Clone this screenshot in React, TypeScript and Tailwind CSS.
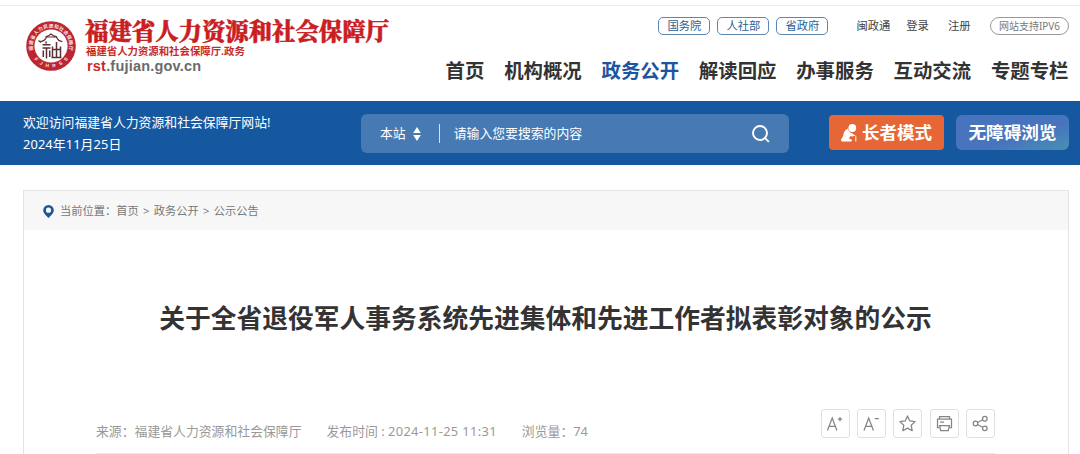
import { ReactNode } from 'react';

const portalLinks = ['国务院', '人社部', '省政府'];

const navigationItems = [
  { id: 'home', label: '首页' },
  { id: 'org', label: '机构概况' },
  { id: 'affairs', label: '政务公开' },
  { id: 'reading', label: '解读回应' },
  { id: 'service', label: '办事服务' },
  { id: 'interaction', label: '互动交流' },
  { id: 'topics', label: '专题专栏' }
];

const activeSection = 'affairs';

const Emblem = () => (
  <svg className="w-[50px] h-[50px] shrink-0" viewBox="0 0 50 50">
    <defs>
      <path id="ringTop" d="M8 31.800 A18.300 18.300 0 1 1 42 31.800" />
      <path id="ringBottom" d="M4.700 32 A21.500 21.500 0 0 0 45.300 32" />
    </defs>
    <circle cx="25" cy="25" r="24.8" fill="#bd2630" />
    <circle cx="25" cy="25" r="16.6" fill="#fff" />
    <text fill="#fbe3e3" fontSize="4.8" fontWeight="700" fontFamily="'Noto Sans CJK SC', sans-serif">
      <textPath href="#ringTop" startOffset="2.5" textLength="66" lengthAdjust="spacing">福建省人力资源和社会保障厅</textPath>
    </text>
    <text fill="#fbe3e3" fontSize="4.8" fontWeight="700" fontFamily="'Liberation Sans', sans-serif">
      <textPath href="#ringBottom" startOffset="7" textLength="39" lengthAdjust="spacing">FJHRSS</textPath>
    </text>
    {/* roof */}
    <path d="M14 20.5c3 0 5.500-1.800 6.500-4.500h10c1 2.700 3 4.500 6 4.500M19.500 15.800l3.500-1.300 2-1.500 2 1.500 4 1.300M12.500 19.500l2.500 2" fill="none" stroke="#5b3034" strokeWidth="1.2" />
    {/* seal mark */}
    <path d="M20 20.500v2M16.500 23.800h8M16.500 27h8M20.500 27v10.500M17.300 29.500v6.500M23.700 29.500v6.500M30.500 21v16M26.500 25.500v10.500M34.500 25.500v10.500M26.500 28.500h8M25.500 36.500h10" fill="none" stroke="#5b3034" strokeWidth="1.500" />
  </svg>
);

const ElderIcon = () => (
  <svg className="w-4 h-[18px]" viewBox="0 0 16 18" fill="#fff">
    <circle cx="11.300" cy="4" r="3.900" />
    <path d="M7 4.500C3.500 6 2.500 9 2.200 12L.2 15.200c-.5 1 .2 2.300 1.300 2.300h8.300c1.200 0 1.400-1.800.3-2.200l-2.300-.8 1.700-2.500 2.300.6 1.700-1.400-2.500-1.900C9.500 8.800 7.300 7.500 7 4.500z" />
    <path d="M11.500 11.500c2.200-.7 3.500.2 3.300 2v4" fill="none" stroke="#fff" strokeWidth="1" />
  </svg>
);

const ToolButton = ({ label, children }: { label: string; children: ReactNode }) => (
  <button
    aria-label={label}
    className="w-[29px] h-[29px] rounded-[3px] border border-[#e0e0e0] flex items-center justify-center"
  >
    <svg className="w-[19px] h-[19px]" viewBox="0 0 19 19" fill="none" stroke="#858585" strokeWidth="1.25">
      {children}
    </svg>
  </button>
);

const Header = () => (
  <header className="h-[101px] pt-[5px]">
    <div className="h-24 border-t border-[#ececec] pl-[26px] pr-[11px] flex justify-between">
      <div className="flex pt-[15px] gap-[9px]">
        <Emblem />
        <div className="-mt-[3px] whitespace-nowrap">
          <div className="text-[23.400px] leading-[25px] font-black text-[#c9201f] [-webkit-text-stroke:0.5px_#c9201f] font-['Noto_Serif_CJK_SC','Noto_Sans_CJK_SC',serif]">
            福建省人力资源和社会保障厅
          </div>
          <div className="text-[10.400px] leading-4 font-bold text-[#c62b2b] pl-px">福建省人力资源和社会保障厅.政务</div>
          <div className="text-[14.500px] leading-[15px] tracking-[0.2px] font-bold text-[#6b6b6b] pl-0.5 font-['Liberation_Sans',sans-serif]">
            <span className="text-[#c62b2b]">rst</span>.fujian.gov.cn
          </div>
        </div>
      </div>

      <div className="pt-[11px] flex flex-col items-end whitespace-nowrap">
        <div className="flex items-center h-[18px] text-[11.300px] text-[#444]">
          <div className="flex gap-[7px]">
            {portalLinks.map((link) => (
              <a
                key={link}
                href="#"
                className="w-[52px] h-[18px] rounded-[5px] border border-[#5d87ae] text-[#2a6191] flex items-center justify-center"
              >
                {link}
              </a>
            ))}
          </div>
          <a href="#" className="ml-[28px]">闽政通</a>
          <a href="#" className="ml-4">登录</a>
          <a href="#" className="ml-[19px]">注册</a>
          <span className="ml-[19.500px] w-[79px] h-[18px] rounded-full border border-[#999] text-[#777] text-[10px] flex items-center justify-center">
            网站支持IPV6
          </span>
        </div>
        <nav className="mt-[21px] mr-[0.500px] flex gap-[19.800px] text-[19.400px] leading-[30px] font-bold text-[#333]">
          {navigationItems.map((item) => (
            <a key={item.id} href={`#${item.id}`} className={activeSection === item.id ? 'text-[#1c56a0]' : ''}>
              {item.label}
            </a>
          ))}
        </nav>
      </div>
    </div>
  </header>
);

const SearchBand = () => (
  <section className="h-16 bg-[#16589f] pl-[23px] pr-[11px] flex items-start text-white whitespace-nowrap">
    <div className="w-[338px] pt-2.5 text-[12.850px] leading-[23px]">
      <p>欢迎访问福建省人力资源和社会保障厅网站!</p>
      <p className="-mt-px tracking-[0.1px]">2024年11月25日</p>
    </div>
    <div className="mt-[13px] w-[428px] h-[39px] rounded-[6px] bg-[#477ab3] pl-[19px] pr-[19px] flex items-center text-[12.850px]">
      <span>本站</span>
      <svg className="ml-[7px] w-2 h-[14px]" viewBox="0 0 8 14" fill="#fff">
        <path d="M4 0l3.800 6H.2zM4 14L.2 8h7.600z" />
      </svg>
      <span className="ml-[18px] w-px h-[19px] bg-[#d5e2f0]" />
      <span className="ml-[14px] flex-1">请输入您要搜索的内容</span>
      <svg className="w-[18px] h-[18px]" viewBox="0 0 18 18" fill="none" stroke="#fff" strokeWidth="1.900">
        <circle cx="8" cy="8" r="7" />
        <path d="M13 13l3.800 3.800" />
      </svg>
    </div>
    <a
      href="#"
      className="ml-10 mt-[14px] w-[115px] h-[35px] rounded-[4px] bg-[#e66735] flex items-center justify-center gap-[5px] text-[17.500px] font-bold"
    >
      <ElderIcon />
      长者模式
    </a>
    <a
      href="#"
      className="ml-3 mt-[14px] w-[113px] h-[35px] rounded-[6px] bg-linear-to-br from-[#4774bd] from-60% to-[#4790b5] flex items-center justify-center text-[17.600px] font-bold"
    >
      无障碍浏览
    </a>
  </section>
);

const Article = () => (
  <main className="mt-[25px] ml-[23px] mr-[11px] h-[264px] border border-b-0 border-[#e4e4e4]">
    <div className="h-[39px] bg-[#f7f7f7] pl-[19px] pt-px flex items-center text-[11.250px] text-[#777] whitespace-nowrap">
      <svg className="w-[11px] h-[13px] mr-1.5" viewBox="0 0 11 13">
        <path fill="#1d5796" fillRule="evenodd" d="M5.500 0A5.300 5.300 0 0 0 .2 5.300C.2 8.500 3.500 11 5.500 13c2-2 5.300-4.500 5.300-7.700A5.300 5.300 0 0 0 5.500 0zm0 2.600a2.600 2.600 0 1 1 0 5.200 2.600 2.600 0 0 1 0-5.200z" />
      </svg>
      <span>当前位置：首页</span>
      <span className="mx-[4.300px]">&gt;</span>
      <span>政务公开</span>
      <span className="mx-[4.300px]">&gt;</span>
      <span>公示公告</span>
    </div>

    <h1 className="mt-[68px] h-10 -ml-px text-center text-[25.750px] leading-10 font-bold text-[#333] whitespace-nowrap">
      关于全省退役军人事务系统先进集体和先进工作者拟表彰对象的公示
    </h1>

    <div className="mt-[71px] ml-[72px] w-[899px] h-[45px] border-b border-[#e8e8e8] flex items-start justify-between">
      <div className="pt-3 flex gap-[25px] text-[12.850px] leading-5 text-[#999] whitespace-nowrap">
        <span>来源：福建省人力资源和社会保障厅</span>
        <span>发布时间 : <span className="tracking-[0.350px]">2024-11-25 11:31</span></span>
        <span>浏览量：74</span>
      </div>
      <div className="flex gap-[7.300px]">
        <ToolButton label="放大字号">
          <path d="M1.500 16.500L6.200 4l4.700 12.500M3.100 12.300h6.200M11.800 5.200h4.400M14 3v4.400" />
        </ToolButton>
        <ToolButton label="缩小字号">
          <path d="M2 16.500L6.700 4l4.700 12.500M3.600 12.300h6.200M12.800 4.500h4" />
        </ToolButton>
        <ToolButton label="收藏">
          <path strokeLinejoin="round" d="M9.500 2l2.300 4.900 5.300.7-3.900 3.700 1 5.400-4.700-2.600-4.700 2.600 1-5.400-3.900-3.700 5.300-.7z" />
        </ToolButton>
        <ToolButton label="打印">
          <path d="M4.500 5V2.500h10V5M4 13.500H2.500V5h14v8.500H15M4.500 11.500h10l-1.200 5H5.700zM5 8h4" />
        </ToolButton>
        <ToolButton label="分享">
          <circle cx="4.500" cy="9.500" r="2.300" />
          <circle cx="13.800" cy="4.700" r="2.300" />
          <circle cx="13.800" cy="14.300" r="2.300" />
          <path d="M6.600 8.500l5-2.700M6.600 10.500l5 2.700" />
        </ToolButton>
      </div>
    </div>
  </main>
);

const App = () => {
  return (
    <div className="w-[1080px] h-[454px] overflow-hidden bg-white font-['Noto_Sans','Noto_Sans_CJK_SC',sans-serif]">
      <Header />
      <SearchBand />
      <Article />
    </div>
  );
};

export default App;
